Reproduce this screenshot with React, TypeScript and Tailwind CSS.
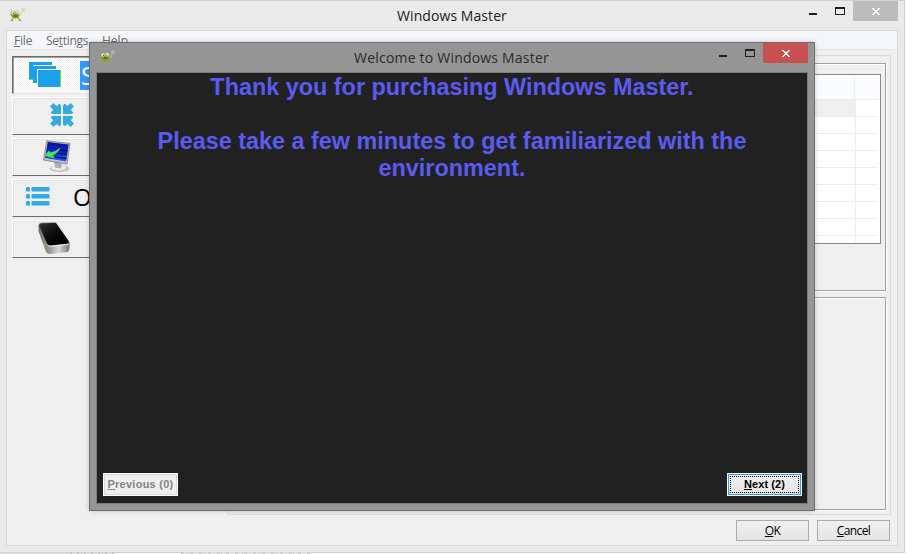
import type { ReactNode } from "react";

const segoe = "font-['Open_Sans','Noto_Sans',sans-serif]";

function AppIcon() {
  return (
    <svg width="16" height="14" viewBox="0 0 16 14" fill="none">
      <path d="M9.500 7.500 L11.500 6.500 L12 3.500 L14.200 3 V1 L12.800 .8" stroke="#c3cf8e" strokeWidth=".8" />
      <circle cx="12.3" cy="1.7" r=".9" stroke="#cdd6a4" strokeWidth=".6" />
      <path d="M3 10 L1.500 12.500 H3 M8 10 L10.500 12.500 H9 M.5 6 L2 7.500" stroke="#9aa436" strokeWidth="1.200" />
      <ellipse cx="5.4" cy="7" rx="4" ry="3.5" fill="#8f9a22" />
      <ellipse cx="5.5" cy="7.8" rx="2" ry="1.2" fill="#5f6a0c" />
      <circle cx="3" cy="4.900" r="1.900" fill="#e8ecdf" stroke="#9ca363" strokeWidth=".5" />
      <circle cx="7.200" cy="4.700" r="1.900" fill="#f0f2ea" stroke="#9ca363" strokeWidth=".5" />
      <circle cx="3.5" cy="5.4" r=".6" fill="#454c20" />
      <circle cx="6.9" cy="5.2" r=".6" fill="#454c20" />
    </svg>
  );
}

function CaptionButtons({ close }: { close: string }) {
  return (
    <div className="flex h-5 shrink-0">
      <div className="flex w-[26px] justify-start pt-3">
        <div className="h-[2px] w-2 bg-[#202020]" />
      </div>
      <div className="w-[18px] pt-[6px]">
        <div className="h-2 w-[10px] border border-t-2 border-[#202020]" />
      </div>
      <div className={`flex h-5 w-[45px] items-center justify-center ${close}`}>
        <svg width="8" height="7" viewBox="0 0 8 7" shapeRendering="crispEdges" fill="#fff">
          <path d="M0 0h2v1h1v1h2v-1h1v-1h2v1h-1v1h-1v1h-1v1h1v1h1v1h1v1h-2v-1h-1v-1h-2v1h-1v1h-2v-1h1v-1h1v-1h1v-1h-1v-1h-1v-1h-1z" />
        </svg>
      </div>
    </div>
  );
}

function SideButton({ children }: { children: ReactNode }) {
  return (
    <div className="flex h-[38px] w-[200px] shrink-0 border-t border-b border-l border-t-white border-b-[#6b6b6b] border-l-white bg-[#efefef] shadow-[inset_1px_1px_0_#e4e4e4]">
      {children}
    </div>
  );
}

function WindowsIcon() {
  return (
    <svg width="34" height="27" viewBox="0 0 34 27" shapeRendering="crispEdges">
      <path d="M0 0h23v3h-19v15h-4z" fill="#1ba1ec" />
      <path d="M0 17h4v1h-4z" fill="#7bdc1e" />
      <path d="M4 4h23v3h-19v14h-4z" fill="#1ba1ec" />
      <path d="M9 8h22v17h-22z" fill="#1ba1ec" />
      <path d="M31 8h1v17h-1z" fill="#7bdc1e" />
    </svg>
  );
}

function CollapseIcon() {
  return (
    <svg width="24" height="24" viewBox="0 0 24 24" fill="#36a9df">
      <path d="M0 3.500 3.500 0 6.500 3 9.500 0.800 11 2.200V11H2.200L.8 9.600 3.200 6.700Z" />
      <path d="M24 3.500 20.500 0 17.500 3 14.500 .8 13 2.200V11H21.800L23.200 9.600 20.800 6.700Z" />
      <path d="M0 20.500 3.500 24 6.500 21 9.500 23.200 11 21.800V13H2.200L.8 14.400 3.200 17.300Z" />
      <path d="M24 20.500 20.500 24 17.500 21 14.500 23.200 13 21.800V13H21.800L23.200 14.400 20.800 17.300Z" />
    </svg>
  );
}

function MonitorIcon() {
  return (
    <svg width="30" height="34" viewBox="0 0 30 34">
      <defs>
        <linearGradient id="screen" x1="0" y1="0" x2="0" y2="1">
          <stop offset="0" stopColor="#0a0f96" />
          <stop offset=".55" stopColor="#0d28cc" />
          <stop offset="1" stopColor="#1f66fa" />
        </linearGradient>
      </defs>
      <ellipse cx="17.500" cy="28.500" rx="10" ry="3.500" fill="#c4c4c4" />
      <ellipse cx="16.500" cy="27.600" rx="7.500" ry="2.800" fill="#ededed" />
      <path d="M12 21 20 24 19 28.500 13 27.500Z" fill="#b0b0b0" />
      <path d="M4.800 .8 28 3.500 25 24 1.500 20Z" fill="#c4c6c8" stroke="#6c6c6c" strokeWidth=".7" />
      <path d="M5.800 2 26.700 4.400 24 21.500 3 18Z" fill="url(#screen)" />
      <path d="M15 9.500 25.500 11M14 13 25 14.500M12 16.800 24.500 18.700" stroke="#060d4a" strokeWidth="1.200" />
      <path d="M2.500 15.500 7 10.500 8.500 12.500Q14 11.200 18.500 7.500Q16 13.500 11 15.200L13 18Q7 17.500 2.500 15.500Z" fill="#46e65c" />
    </svg>
  );
}

function ListIcon() {
  return (
    <svg width="24" height="19" viewBox="0 0 24 19" fill="#36a9df">
      {[0, 7, 14].map((y) => (
        <g key={y}>
          <rect x="0" y={y} width="4" height="4.6" rx="1.2" />
          <rect x="5.5" y={y} width="18" height="4.6" rx="1.2" />
        </g>
      ))}
    </svg>
  );
}

function DeviceIcon() {
  return (
    <svg width="34" height="34" viewBox="0 0 34 34">
      <defs>
        <linearGradient id="metal" x1="0" y1="0" x2="1" y2="0">
          <stop offset="0" stopColor="#6c6c6c" />
          <stop offset=".35" stopColor="#999" />
          <stop offset=".65" stopColor="#d8d8d8" />
          <stop offset="1" stopColor="#777" />
        </linearGradient>
        <linearGradient id="glass" x1="0" y1="0" x2="1" y2="1">
          <stop offset="0" stopColor="#333" />
          <stop offset=".4" stopColor="#111" />
          <stop offset=".7" stopColor="#000" />
        </linearGradient>
      </defs>
      <g transform="translate(.5 0)">
        <path d="M0 3Q.5 1 3 .8L16 .2Q18 0 19 2L31 20.500Q31.500 28 29.500 30L12 32Q9 32.500 7.500 30L0 9Z" fill="url(#metal)" />
        <path d="M.6 3.500Q1 1.600 3 1.500L16 .8Q17.500 .8 18.200 2L30.500 19.500Q30.500 21.500 28.500 21.800L12 23.500Q9.500 23.500 8.500 21.500Z" fill="url(#glass)" />
        <path d="M9 23.200Q10.500 24.500 12.500 24.300L30 22.200" stroke="#f0f0f0" strokeWidth=".9" fill="none" />
        <path d="M6.500 21.500V24" stroke="#b3cc20" strokeWidth="1.200" />
      </g>
    </svg>
  );
}

const rows = [0, 1, 2, 3, 4, 5, 6, 7];

function DataList() {
  return (
    <div className="flex h-[170px] flex-col border border-[#828790] bg-white p-px">
      <div className="flex h-[24px] shrink-0 border-b border-[#e5eef9] bg-[#fbfcfd]">
        <div className="flex-1 border-r border-[#e5eef9]" />
        <div className="w-6" />
      </div>
      <div className="flex flex-1 flex-col overflow-hidden pr-px">
        {rows.map((r) => (
          <div key={r} className="flex h-[17px] shrink-0 border-b border-[#ededed]">
            <div className={`flex-1 border-r border-[#ededed] ${r === 0 ? "bg-[#efefef]" : ""}`} />
            <div className="w-[22px]" />
          </div>
        ))}
        <div className="flex flex-1">
          <div className="flex-1 border-r border-[#ededed]" />
          <div className="w-[22px]" />
        </div>
      </div>
    </div>
  );
}

function DialogWindow() {
  return (
    <div className="absolute top-[42px] left-[89px] flex h-[469px] w-[726px] flex-col border border-[#6e6e6e] bg-[#959595] shadow-[0_0_5px_rgba(0,0,0,0.2)]">
      <div className="flex h-[29px] shrink-0">
        <div className="w-[94px] shrink-0 pt-[7px] pl-[10px]">
          <AppIcon />
        </div>
        <div className={`min-w-0 flex-1 pt-1 text-center text-[14px] leading-[22px] whitespace-nowrap text-[#2b2b2b] ${segoe}`}>
          <span className="tracking-[0.2px]">Welcome to Windows Master</span>
        </div>
        <div className="pr-[6px]">
          <CaptionButtons close="bg-[#c75050]" />
        </div>
      </div>
      <div className="mx-[6px] mb-[6px] flex flex-1 flex-col justify-between border border-[#7c7c7c] bg-[#212121]">
        <div className="pt-px text-center font-['Liberation_Sans',Arial,sans-serif] text-[23.4px] leading-[27px] font-bold text-[#5b5bef]">
          <p>Thank you for purchasing Windows Master.</p>
          <p className="mt-[27px]">Please take a few minutes to get familiarized with the</p>
          <p>environment.</p>
        </div>
        <div className="flex justify-between pr-[5px] pb-[7px] pl-[6px] font-['Liberation_Sans',Arial,sans-serif] text-[11px] font-bold">
          <div className="h-[23px] w-[75px] border border-white bg-[#efefef]">
            <div className="flex h-full items-center justify-center border border-[#d9d9d9] whitespace-nowrap text-[#838383]">
              <span className="tracking-[0.25px]"><u>P</u>revious (0)</span>
            </div>
          </div>
          <div className="h-[23px] w-[75px] border border-white">
            <div className="h-full border border-[#3399ff] bg-linear-to-b from-[#f0f0f0] to-[#e5e5e5] p-px">
              <div className="flex h-full items-center justify-center border border-dotted border-black text-black">
                <span className="tracking-[0.1px]"><u>N</u>ext (2)</span>
              </div>
            </div>
          </div>
        </div>
      </div>
    </div>
  );
}

export default function App() {
  return (
    <div className={`relative h-[554px] w-[906px] overflow-hidden bg-white ${segoe}`}>
      <div className="flex h-[553px] w-[905px] flex-col border-t border-r border-b border-[#d0d0d0] bg-[#eaeaea]">
        <div className="flex h-[29px] shrink-0">
          <div className="w-[95px] shrink-0 pt-[7px] pl-[10px]">
            <AppIcon />
          </div>
          <div className="flex-1 pt-1 text-center text-[14px] leading-[22px] tracking-[0.07px] whitespace-nowrap text-[#202020]">Windows Master</div>
          <div className="pr-[6px]">
            <CaptionButtons close="bg-[#bcbcbc]" />
          </div>
        </div>
        <div className="mr-[6px] mb-[6px] ml-[6px] flex flex-1 flex-col border border-[#d9d9d9] bg-[#efefef]">
          <div className="flex h-[19px] shrink-0 gap-[14px] border-b border-[#e5e5e5] bg-[#f4f6f9] pl-[7px] text-[12px] leading-[20px] text-[#6d6d6d]">
            <span className="w-[18px] tracking-[-0.2px]"><u>F</u>ile</span>
            <span className="w-[42px] tracking-[-0.3px]">Se<u>t</u>tings</span>
            <span><u>H</u>elp</span>
          </div>
          <div className="flex h-[465px] shrink-0 pt-[5px]">
            <div className="flex w-[221px] shrink-0 flex-col gap-[3px] pt-px pl-[5px]">
              <div className="flex h-[38px] w-[200px] shrink-0 border-t border-b border-l border-[#6b6b6b] border-b-[#e3e3e3] bg-[repeating-conic-gradient(#ffffff_0_25%,#efefef_0_50%)] bg-[length:2px_2px] pt-1 pl-4 shadow-[inset_1px_1px_0_#a0a0a0]">
                <div className="w-[51px] pt-px"><WindowsIcon /></div>
                <div className="h-[29px] w-[90px] bg-[#3399ff] pl-px text-[25px] leading-[28px] text-white">S</div>
              </div>
              <SideButton><div className="pt-[5px] pl-[37px]"><CollapseIcon /></div></SideButton>
              <SideButton><div className="pt-px pl-[29px]"><MonitorIcon /></div></SideButton>
              <SideButton>
                <div className="w-[60px] pt-[7px] pl-[13px]"><ListIcon /></div>
                <div className="text-[24px] leading-[33px] text-black">O</div>
              </SideButton>
              <SideButton><div className="pt-px pl-[25px]"><DeviceIcon /></div></SideButton>
            </div>
            <div className="flex w-[663px] flex-col gap-[6px] border border-[#dcdcdc] pt-[7px] pr-1 pb-1 pl-1">
              <div className="h-[228px] border border-[#a0a0a0] px-1 pt-[10px] shadow-[1px_1px_0_#fff,inset_1px_1px_0_#fff]">
                <DataList />
              </div>
              <div className="flex-1 border border-[#a0a0a0] shadow-[1px_1px_0_#fff,inset_1px_1px_0_#fff]" />
            </div>
          </div>
          <div className="flex justify-end gap-2 pt-[5px] pr-[7px] text-[12px] text-black">
            <div className="flex h-[21px] w-[73px] items-center justify-center border border-[#acacac] bg-linear-to-b from-[#f0f0f0] to-[#e5e5e5]"><span className="tracking-[-0.6px]"><u>O</u>K</span></div>
            <div className="flex h-[21px] w-[73px] items-center justify-center border border-[#acacac] bg-linear-to-b from-[#f0f0f0] to-[#e5e5e5]"><span className="tracking-[-0.6px]"><u>C</u>ancel</span></div>
          </div>
        </div>
      </div>
      <div className="flex h-px">
        <div className="w-[70px] bg-[#e3e3e3]" />
        <div className="w-[45px] bg-[repeating-linear-gradient(90deg,#bbb_0_2px,#eee_2px_7px)]" />
        <div className="w-[66px] bg-white" />
        <div className="w-[132px] bg-[repeating-linear-gradient(90deg,#ccc_0_3px,#f2f2f2_3px_9px)]" />
      </div>
      <DialogWindow />
    </div>
  );
}
